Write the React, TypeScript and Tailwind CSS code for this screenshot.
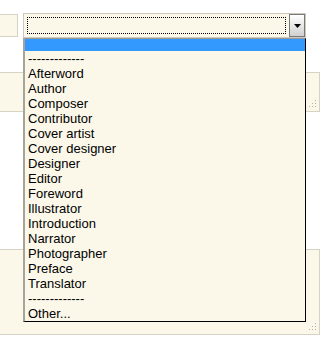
import React from "react";

const sep = "-------------";

const roles = [
  sep,
  "Afterword",
  "Author",
  "Composer",
  "Contributor",
  "Cover artist",
  "Cover designer",
  "Designer",
  "Editor",
  "Foreword",
  "Illustrator",
  "Introduction",
  "Narrator",
  "Photographer",
  "Preface",
  "Translator",
  sep,
  "Other...",
];

const Grip = () => (
  <svg
    className="absolute bottom-[3px] right-[2px]"
    width="9"
    height="9"
    viewBox="0 0 9 9"
  >
    <rect x="7" y="1" width="1" height="1" fill="#b5b2a5" />
    <rect x="4" y="4" width="1" height="1" fill="#b5b2a5" />
    <rect x="7" y="4" width="1" height="1" fill="#b5b2a5" />
    <rect x="1" y="7" width="1" height="1" fill="#b5b2a5" />
    <rect x="4" y="7" width="1" height="1" fill="#b5b2a5" />
    <rect x="7" y="7" width="1" height="1" fill="#b5b2a5" />
  </svg>
);

const App = () => {
  return (
    <div className="relative w-[330px] h-[341px] bg-white overflow-hidden font-['Liberation_Sans',Arial,sans-serif] text-[13px] text-black">
      <div className="pt-[13px] flex items-center">
        <div className="ml-[-10px] w-[28px] h-[23px] border border-[#d6d3c4] bg-[#fbf8ea]" />
        <div className="ml-[5px] w-[283px] h-[25px] border border-[#cbc8bb] bg-[#fbf8ea] flex items-stretch">
          <div className="flex-1 m-[3px] border border-dotted border-black" />
          <div className="w-[16px] border border-[#7a7a7a] bg-gradient-to-b from-white to-[#d0d0d0] flex items-center justify-center">
            <svg width="7" height="4" viewBox="0 0 7 4">
              <path d="M0 0H7L3.5 4Z" fill="#000" />
            </svg>
          </div>
        </div>
      </div>

      <div className="relative mt-[34px] ml-[-10px] w-[330px] h-[40px] border border-[#d6d3c4] bg-[#fbf8ea]">
        <Grip />
      </div>

      <div className="relative mt-[137px] ml-[-10px] w-[330px] h-[86px] border border-[#d6d3c4] bg-[#fbf8ea]">
        <Grip />
      </div>

      <ul className="absolute left-[23px] top-[38px] w-[283px] border-l-2 border-t border-r border-b border-l-[#a7a49a] border-t-[#9a9a9a] border-r-black border-b-black bg-[#fbf8ea] leading-[15px]">
        <li className="h-[12px] bg-[#3399ff]" />
        {roles.map((r, i) => (
          <li key={i} className="h-[15px] pl-[3px] whitespace-nowrap">
            {r}
          </li>
        ))}
      </ul>
    </div>
  );
};

export default App;
